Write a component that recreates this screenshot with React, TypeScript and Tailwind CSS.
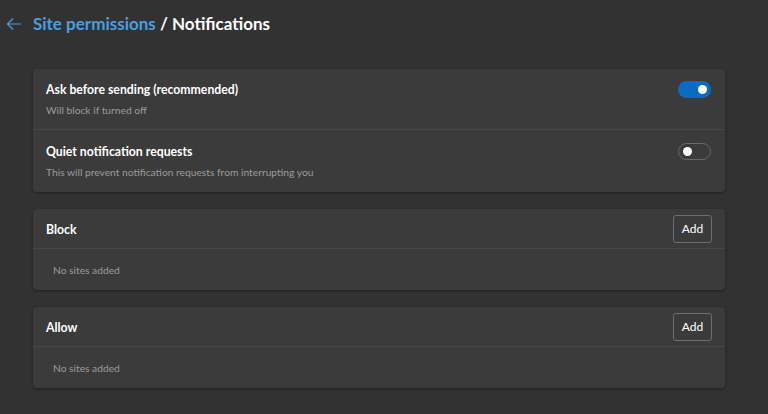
const font = { fontFamily: 'Lato, "Segoe UI", "Noto Sans", sans-serif' };

function Toggle({ on }: { on: boolean }) {
  return on ? (
    <div className="w-[33px] h-[17px] rounded-full bg-[#0a6bc3] flex items-center justify-end pr-[4px]">
      <div className="w-[9px] h-[9px] rounded-full bg-white" />
    </div>
  ) : (
    <div className="w-[33px] h-[17px] rounded-full border border-[#6a6a6a] flex items-center pl-[4px]">
      <div className="w-[9px] h-[9px] rounded-full bg-white" />
    </div>
  );
}

function SettingRow({ title, desc, on, last }: { title: string; desc: string; on: boolean; last?: boolean }) {
  return (
    <div
      className={`flex flex-col justify-center pl-[13px] pr-[14px] ${
        last ? 'h-[62px]' : 'h-[61px] border-b border-[#474747]'
      }`}
    >
      <div className="flex items-center justify-between">
        <span className="text-[12.25px] font-bold text-white pt-[1px]">{title}</span>
        <Toggle on={on} />
      </div>
      <span className="text-[10.25px] text-[#9c9c9c] mt-[3px]">{desc}</span>
    </div>
  );
}

function SiteList({ title }: { title: string }) {
  return (
    <div className="bg-[#3b3b3b] rounded-[4px] shadow-[0_1px_3px_rgba(0,0,0,0.35)]">
      <div className="h-[40px] flex items-center justify-between pl-[13px] pr-[13px] border-b border-[#474747]">
        <span className="text-[12.25px] font-bold text-white pt-[3px]">{title}</span>
        <button className="h-[28px] w-[39px] rounded-[3px] border border-[#6e6e6e] text-[12px] text-white">
          Add
        </button>
      </div>
      <div className="h-[41px] flex items-center pl-[20px] pt-[2px] text-[10.25px] text-[#9c9c9c]">No sites added</div>
    </div>
  );
}

export default function App() {
  return (
    <div className="w-[768px] h-[414px] bg-[#323232] overflow-hidden" style={font}>
      {/* Header */}
      <div className="flex items-center h-[48px] pl-[6px]">
        <svg width="16" height="14" viewBox="0 0 16 14" className="mr-[11px]">
          <path d="M15 7H1.5M7 1.5L1.5 7 7 12.5" fill="none" stroke="#4a9ee0" strokeWidth="1.2" />
        </svg>
        <span className="text-[17px] font-bold text-[#4a9ee0]">Site permissions</span>
        <span className="text-[17px] font-bold text-white">&nbsp;/ Notifications</span>
      </div>

      <div className="ml-[33px] w-[692px] mt-[21px] flex flex-col gap-[17px]">
        {/* Notification settings */}
        <div className="bg-[#3b3b3b] rounded-[4px] shadow-[0_1px_3px_rgba(0,0,0,0.35)]">
          <SettingRow title="Ask before sending (recommended)" desc="Will block if turned off" on />
          <SettingRow
            title="Quiet notification requests"
            desc="This will prevent notification requests from interrupting you"
            on={false}
            last
          />
        </div>

        <SiteList title="Block" />
        <SiteList title="Allow" />
      </div>
    </div>
  );
}
